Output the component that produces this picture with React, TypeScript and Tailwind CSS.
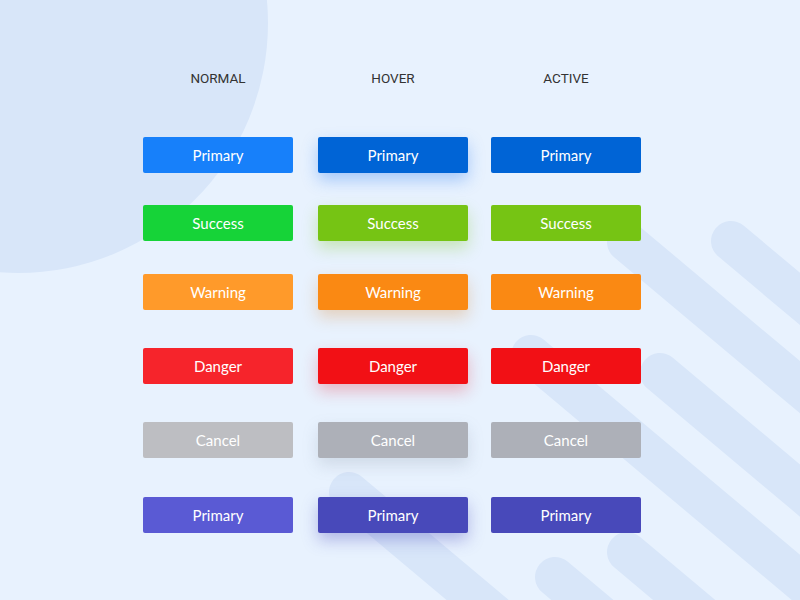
import React from "react";

type Variant = {
  label: string;
  normal: string;
  hover: string;
  active: string;
  mt: string;
};

// one row per button kind, column classes are written out in full
const rows: Variant[] = [
  {
    label: "Primary",
    normal: "bg-[#1780fa]",
    hover: "bg-[#0064d6] shadow-[0_7px_16px_rgba(40,120,240,0.35)]",
    active: "bg-[#0064d6]",
    mt: "mt-[50px]",
  },
  {
    label: "Success",
    normal: "bg-[#16d338]",
    hover: "bg-[#76c414] shadow-[0_7px_16px_rgba(118,196,20,0.3)]",
    active: "bg-[#76c414]",
    mt: "mt-[32px]",
  },
  {
    label: "Warning",
    normal: "bg-[#ff9a2a]",
    hover: "bg-[#fa8913] shadow-[0_7px_16px_rgba(220,130,40,0.3)]",
    active: "bg-[#fa8913]",
    mt: "mt-[33px]",
  },
  {
    label: "Danger",
    normal: "bg-[#f6242b]",
    hover: "bg-[#f21015] shadow-[0_7px_16px_rgba(230,40,60,0.3)]",
    active: "bg-[#f21015]",
    mt: "mt-[38px]",
  },
  {
    label: "Cancel",
    normal: "bg-[#bdbec2]",
    hover: "bg-[#adb0b8] shadow-[0_7px_16px_rgba(120,130,150,0.22)]",
    active: "bg-[#adb0b8]",
    mt: "mt-[38px]",
  },
  {
    label: "Primary",
    normal: "bg-[#5a5ad4]",
    hover: "bg-[#4849ba] shadow-[0_7px_16px_rgba(72,73,186,0.35)]",
    active: "bg-[#4849ba]",
    mt: "mt-[39px]",
  },
];

// cap centres of the diagonal bars in the background
const stripes: [number, number][] = [
  [731, 241],
  [627, 242],
  [531, 355],
  [660, 373],
  [349, 492],
  [627, 552],
  [555, 577],
];

const Background = () => (
  <svg className="absolute inset-0" width="800" height="600" viewBox="0 0 800 600">
    <circle cx="18" cy="23" r="250" fill="#d8e6f9" />
    {stripes.map(([x, y], i) => (
      <line
        key={i}
        x1={x}
        y1={y}
        x2={x + 0.766 * 700}
        y2={y + 0.643 * 700}
        stroke="#d8e6f9"
        strokeWidth="40"
        strokeLinecap="round"
      />
    ))}
  </svg>
);

const Btn = ({ label, className }: { label: string; className: string }) => (
  <button
    className={`h-[36px] w-[150px] shrink-0 rounded-[2px] text-[15px] text-white font-['Lato',sans-serif] ${className}`}
  >
    {label}
  </button>
);

export default function App() {
  return (
    <div className="relative w-[800px] h-[600px] overflow-hidden bg-[#e8f2fe]">
      <Background />

      <div className="relative pt-[70px] pl-[143px]">
        {/* column titles */}
        <div className="flex text-[13.5px] leading-[17px] text-[#333] font-['Roboto',sans-serif] text-center">
          <div className="w-[150px]">NORMAL</div>
          <div className="w-[150px] ml-[25px]">HOVER</div>
          <div className="w-[150px] ml-[23px]">ACTIVE</div>
        </div>

        {rows.map((row, i) => (
          <div key={i} className={`flex gap-x-[24px] ${row.mt}`}>
            <Btn label={row.label} className={row.normal} />
            <Btn label={row.label} className={`ml-[1px] ${row.hover}`} />
            <Btn label={row.label} className={`-ml-[1px] ${row.active}`} />
          </div>
        ))}
      </div>
    </div>
  );
}
